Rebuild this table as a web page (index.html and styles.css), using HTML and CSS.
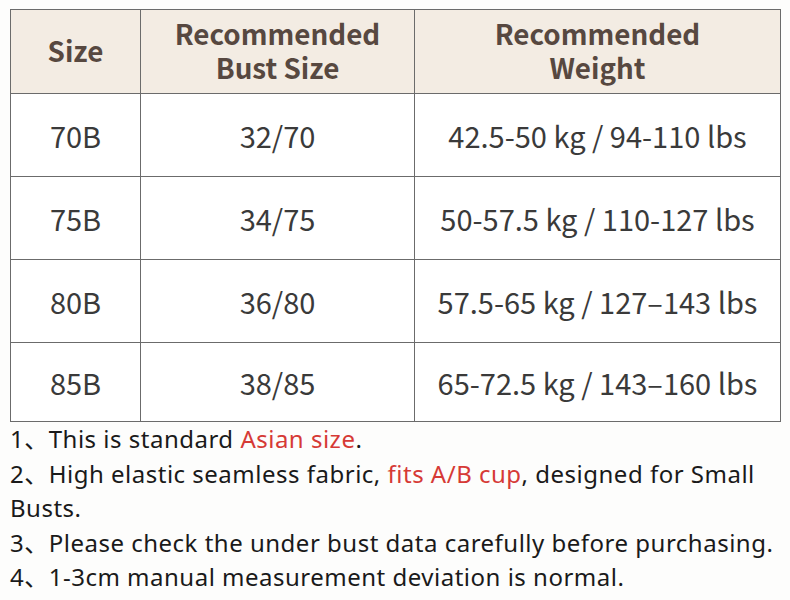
FILE: index.html
```html
<!DOCTYPE html>
<html>
<head>
<meta charset="utf-8">
<link rel="stylesheet" href="styles.css">
</head>
<body>
<div class="page">
  <table class="chart">
    <colgroup>
      <col class="c1"><col class="c2"><col class="c3">
    </colgroup>
    <thead>
      <tr class="head">
        <th>Size</th>
        <th><div class="hl">Recommended</div><div class="hl">Bust Size</div></th>
        <th><div class="hl">Recommended</div><div class="hl">Weight</div></th>
      </tr>
    </thead>
    <tbody>
      <tr class="r1"><td>70B</td><td>32/70</td><td>42.5-50 kg / 94-110 lbs</td></tr>
      <tr class="r2"><td>75B</td><td>34/75</td><td>50-57.5 kg / 110-127 lbs</td></tr>
      <tr class="r3"><td>80B</td><td>36/80</td><td>57.5-65 kg / 127–143 lbs</td></tr>
      <tr class="r4"><td>85B</td><td>38/85</td><td>65-72.5 kg / 143–160 lbs</td></tr>
    </tbody>
  </table>
  <div class="notes">
    <p>1、This is standard <span class="red">Asian size</span>.</p>
    <p>2、High elastic seamless fabric, <span class="red">fits A/B cup</span>, designed for Small Busts.</p>
    <p>3、Please check the under bust data carefully before purchasing.</p>
    <p>4、1-3cm manual measurement deviation is normal.</p>
  </div>
</div>
</body>
</html>
```
FILE: styles.css
```css
html, body {
  margin: 0;
  padding: 0;
  background: #fdfdfc;
}
.page {
  width: 790px;
  height: 600px;
  padding: 9px 0 0 10px;
  box-sizing: border-box;
  overflow: hidden;
}
.chart {
  border-collapse: collapse;
  width: 770px;
  table-layout: fixed;
  font-family: "Noto Sans CJK SC", "Noto Sans", sans-serif;
}
.c1 { width: 130px; }
.c2 { width: 274px; }
.c3 { width: 366px; }
.chart th, .chart td {
  border: 1.5px solid #6b6b6b;
  text-align: center;
  vertical-align: middle;
  padding: 0;
}
.head th {
  background: #f3ece3;
  color: #574840;
  font-weight: 700;
  font-size: 27.8px;
  line-height: 34px;
  height: 79px;
  padding-bottom: 4px;
}
.hl { line-height: 34px; }
.chart td {
  color: #3a3a3a;
  font-size: 29px;
  background: #fff;
}
.r1 td, .r2 td, .r3 td { height: 82px; }
.r4 td { height: 78px; }
.notes {
  font-family: "Noto Sans", "Noto Sans CJK SC", sans-serif;
  font-size: 24px;
  letter-spacing: 0.5px;
  line-height: 34.5px;
  color: #1a1a1a;
  margin-top: 0;
  width: 770px;
}
.notes p { margin: 0; }
.red { color: #d63a36; }
```
